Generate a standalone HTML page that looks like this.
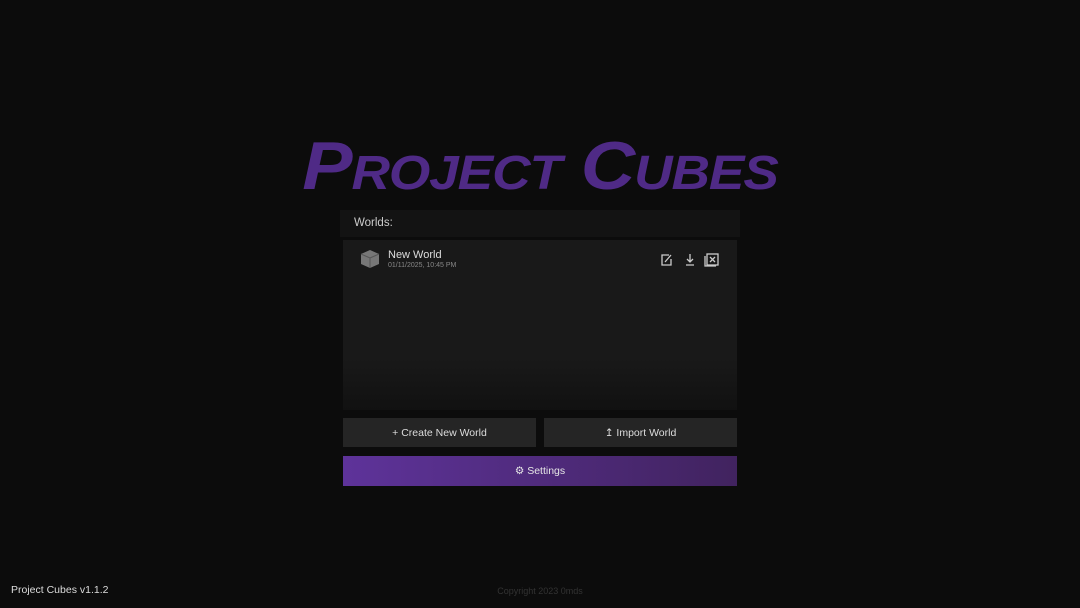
<!DOCTYPE html>
<html><head><style>
body{margin:0;width:1080px;height:608px;background:#0c0c0c;font-family:"Liberation Sans",sans-serif;color:#ddd;position:relative;overflow:hidden}
.t{position:absolute;left:0;width:1080px;top:126px;text-align:center;font-size:68px;font-weight:bold;font-style:italic;font-variant:small-caps;color:#4f2a86;letter-spacing:-1px;line-height:80px;transform:scaleX(1.11)}
.hdr{position:absolute;left:340px;top:210px;width:400px;height:27px;background:#131313;font-size:11.5px;line-height:27px;box-sizing:border-box;padding-left:14px;color:#ccc}
.list{position:absolute;left:343px;top:240px;width:394px;height:170px;background:linear-gradient(#191919 70%,#111 100%)}
.btn{position:absolute;top:418px;height:29px;width:193px;background:#252525;font-size:10.5px;line-height:30px;text-align:center;color:#ddd}
.set{position:absolute;left:343px;top:456px;width:394px;height:30px;background:linear-gradient(90deg,#5e339a,#41235f);font-size:10.5px;line-height:31px;text-align:center;color:#e6e6e6}
</style></head><body>
<div class="t">Project Cubes</div>
<div class="hdr">Worlds:</div>
<div class="list">
<svg style="position:absolute;left:17px;top:9px" width="20" height="20" viewBox="0 0 20 20"><path d="M10 1 19 5 19 15 10 19 1 15 1 5Z" fill="#777"/><path d="M1 5 10 9 19 5M10 9V19" stroke="#555" fill="none"/></svg>
<div style="position:absolute;left:45px;top:9px;font-size:11px;color:#ddd">New World</div>
<div style="position:absolute;left:45px;top:22px;font-size:7px;color:#888">01/11/2025, 10:45 PM</div>
<svg style="position:absolute;left:317px;top:13px" width="62" height="14" viewBox="0 0 62 14" fill="none" stroke="#ccc" stroke-width="1.3"><path d="M9 2H2V12H11V6M5 9 11 2"/><path d="M30 1V9M27 6 30 9 33 6M26 12H34"/><rect x="47" y="1" width="11" height="11"/><path d="M45 3V13H56M50 4 55 9M55 4 50 9"/></svg>
</div>
<div class="btn" style="left:343px">+ Create New World</div>
<div class="btn" style="left:544px">&#8613; Import World</div>
<div class="set">&#9881; Settings</div>
<div style="position:absolute;left:11px;top:584px;font-size:10.5px;color:#ddd">Project Cubes v1.1.2</div>
<div style="position:absolute;left:0;width:1080px;text-align:center;top:586px;font-size:9px;color:#333">Copyright 2023 0mds</div>
</body></html>
